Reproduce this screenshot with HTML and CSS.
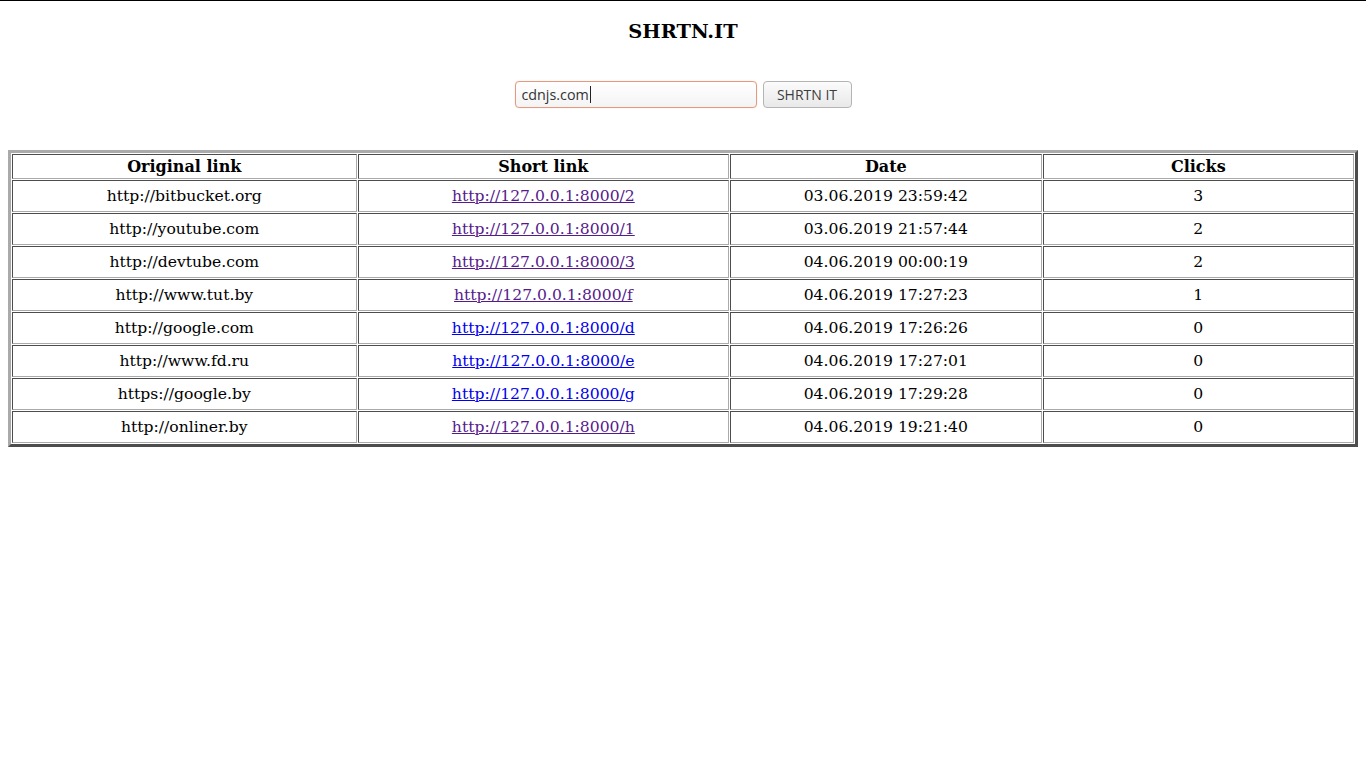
FILE: index.html
```html
<!DOCTYPE html>
<html>
<head>
<meta charset="utf-8">
<title>SHRTN.IT</title>
<link rel="stylesheet" href="styles.css">
</head>
<body>
<div class="page">
  <h1 class="title">SHRTN.IT</h1>
  <form class="shorten">
    <div class="field"><span class="value">cdnjs.com</span><span class="caret"></span></div>
    <button type="button" class="btn">SHRTN IT</button>
  </form>
  <table class="links">
    <colgroup>
      <col class="c1"><col class="c2"><col class="c3"><col class="c4">
    </colgroup>
    <thead>
      <tr><th>Original link</th><th>Short link</th><th>Date</th><th>Clicks</th></tr>
    </thead>
    <tbody>
      <tr><td>http://bitbucket.org</td><td><a class="visited" href="#">http://127.0.0.1:8000/2</a></td><td>03.06.2019 23:59:42</td><td>3</td></tr>
      <tr><td>http://youtube.com</td><td><a class="visited" href="#">http://127.0.0.1:8000/1</a></td><td>03.06.2019 21:57:44</td><td>2</td></tr>
      <tr><td>http://devtube.com</td><td><a class="visited" href="#">http://127.0.0.1:8000/3</a></td><td>04.06.2019 00:00:19</td><td>2</td></tr>
      <tr><td>http://www.tut.by</td><td><a class="visited" href="#">http://127.0.0.1:8000/f</a></td><td>04.06.2019 17:27:23</td><td>1</td></tr>
      <tr><td>http://google.com</td><td><a class="link" href="#">http://127.0.0.1:8000/d</a></td><td>04.06.2019 17:26:26</td><td>0</td></tr>
      <tr><td>http://www.fd.ru</td><td><a class="link" href="#">http://127.0.0.1:8000/e</a></td><td>04.06.2019 17:27:01</td><td>0</td></tr>
      <tr><td>https://google.by</td><td><a class="link" href="#">http://127.0.0.1:8000/g</a></td><td>04.06.2019 17:29:28</td><td>0</td></tr>
      <tr><td>http://onliner.by</td><td><a class="visited" href="#">http://127.0.0.1:8000/h</a></td><td>04.06.2019 19:21:40</td><td>0</td></tr>
    </tbody>
  </table>
</div>
</body>
</html>
```
FILE: styles.css
```css
html, body {
  margin: 0;
  padding: 0;
  background: #fff;
}
body {
  font-family: "DejaVu Serif", serif;
  font-size: 16px;
  color: #000;
}
.page {
  border-top: 1px solid #000;
  padding: 0 8px;
}
.title {
  font-size: 19.4px;
  font-weight: bold;
  text-align: center;
  margin: 20px 0 0;
  line-height: 22px;
}
.shorten {
  display: flex;
  justify-content: center;
  gap: 6px;
  margin-top: 38px;
}
.field {
  box-sizing: border-box;
  width: 242px;
  height: 27px;
  border: 1px solid #e39a80;
  border-radius: 4px;
  background: linear-gradient(#ffffff, #f4f4f4);
  box-shadow: 0 0 1px #f0c0ae;
  display: flex;
  align-items: center;
  padding: 0 6px;
  font-family: "Open Sans", "DejaVu Sans", sans-serif;
  font-size: 14.3px;
  color: #333;
}
.caret {
  display: inline-block;
  width: 1px;
  height: 17px;
  background: #222;
  margin-left: 1px;
}
.btn {
  box-sizing: border-box;
  width: 89px;
  height: 27px;
  border: 1px solid #b4b4b4;
  border-radius: 4px;
  background: linear-gradient(#fbfbfb, #e9e9e9);
  font-family: "Open Sans", "DejaVu Sans", sans-serif;
  font-size: 14px;
  color: #3c3c3c;
  padding: 0;
}
.links {
  width: 100%;
  margin-top: 42px;
  border: 3px solid;
  border-color: #aaaaaa #4d4d4d #4d4d4d #aaaaaa;
  border-spacing: 1px;
}
.c1 { width: 345px; }
.c2 { width: 372px; }
.c3 { width: 312px; }
.c4 { width: 312px; }
.links th, .links td {
  border: 1px solid;
  border-color: #4d4d4d #aaaaaa #aaaaaa #4d4d4d;
  text-align: center;
  line-height: 19px;
}
.links th {
  padding: 2px 1px;
  font-weight: bold;
}
.links td {
  padding: 6px 1px 5px;
  font-size: 15.6px;
}
.links a {
  text-decoration: underline;
}
.links a.visited { color: #551a8b; }
.links a.link { color: #0000ee; }
```
